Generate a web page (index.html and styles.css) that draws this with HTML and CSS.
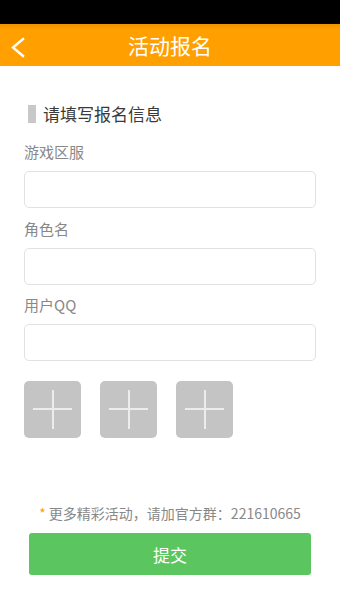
FILE: index.html
```html
<!DOCTYPE html>
<html lang="zh-CN">
<head>
<meta charset="utf-8">
<title>活动报名</title>
<link rel="stylesheet" href="styles.css">
</head>
<body>
<div class="statusbar"></div>
<header class="topbar">
  <svg class="back" width="16" height="22" viewBox="0 0 16 22"><polyline points="13,2 3,10.5 13,19" fill="none" stroke="#fff" stroke-width="2.4" stroke-linecap="square"/></svg>
  <h1 class="title">活动报名</h1>
</header>
<main class="content">
  <div class="section-title"><span class="bar"></span><span>请填写报名信息</span></div>
  <label class="label">游戏区服</label>
  <div class="input"></div>
  <label class="label">角色名</label>
  <div class="input"></div>
  <label class="label">用户QQ</label>
  <div class="input"></div>
  <div class="uploads">
    <div class="add"><span class="h"></span><span class="v"></span></div>
    <div class="add"><span class="h"></span><span class="v"></span></div>
    <div class="add"><span class="h"></span><span class="v"></span></div>
  </div>
  <p class="note"><span class="star">*</span> 更多精彩活动，请加官方群：221610665</p>
  <button class="submit">提交</button>
</main>
</body>
</html>
```
FILE: styles.css
```css
* { box-sizing: border-box; }
html, body { margin: 0; padding: 0; background: #fff; }
body { width: 340px; height: 600px; overflow: hidden; font-family: "Noto Sans CJK SC", "Noto Sans", sans-serif; }
.statusbar { height: 24px; background: #000; }
.topbar {
  position: relative;
  height: 42px;
  background: linear-gradient(#f09100 0, #ffa000 6px, #ffa000 100%);
  display: flex; align-items: center; justify-content: center;
}
.back { position: absolute; left: 10px; top: 13px; }
.title { margin: 0; color: #fff; font-size: 21px; font-weight: normal; line-height: 28px; }
.content { padding: 0 24px; display: flex; flex-direction: column; }
.section-title {
  margin-top: 38px; margin-left: 4px;
  display: flex; align-items: center; gap: 7px;
  height: 20px; font-size: 17px; color: #3a3a3a; line-height: 20px;
}
.section-title .bar { width: 8px; height: 18px; background: #c8c8c8; }
.label { display: block; margin-top: 18px; font-size: 15px; line-height: 20px; color: #888; }
.input + .label { margin-top: 11px; }
.input + .label + .input + .label { margin-top: 10px; }
.input {
  margin-top: 9px; height: 37px;
  border: 1px solid #e2e2e2; border-radius: 5px; background: #fff;
}
.uploads { margin-top: 20px; display: flex; gap: 19px; }
.add { position: relative; width: 57px; height: 57px; background: #c4c4c4; border-radius: 5px; }
.add .h { position: absolute; left: 9px; top: 27px; width: 39px; height: 2px; background: #ececec; }
.add .v { position: absolute; left: 28px; top: 9px; width: 2px; height: 39px; background: #ececec; }
.note { margin: 65px 0 0; text-align: center; font-size: 14px; line-height: 20px; color: #888; }
.note .star { color: #ffa000; }
.submit {
  margin: 10px 5px 0; height: 42px;
  border: none; border-radius: 3px; background: #5bc55f;
  color: #fff; font-family: inherit; font-size: 17px;
}
```
